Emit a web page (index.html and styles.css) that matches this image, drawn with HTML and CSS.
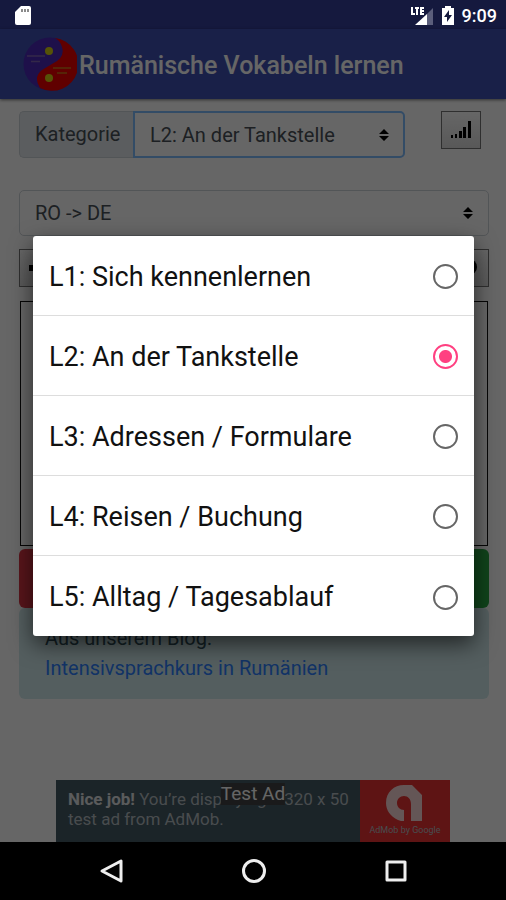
FILE: index.html
```html
<!DOCTYPE html>
<html lang="de">
<head>
<meta charset="utf-8">
<meta name="viewport" content="width=device-width, initial-scale=1">
<title>Rumänische Vokabeln lernen</title>
<link rel="stylesheet" href="styles.css">
</head>
<body>
<div class="status">
  <svg class="status-sd" width="18" height="20" viewBox="0 0 18 20"><path fill="#fff" d="M7 0h8q2 0 2 2v15q0 2-2 2H3q-2 0-2-2V6z"/><path d="M8 3v3M11 3v3M14 3v3" stroke="#666" stroke-width="1.5"/></svg>
  <div class="status-right">
    <svg width="24" height="20" viewBox="0 0 24 20"><path fill="#5b5e7b" d="M23 2v17h-6V8z"/><path fill="#fff" d="M17 8v11H5z"/><path d="M2 1v7h3M5 2h4M7 2v7M14 2h-3v6h3M11 5h3" fill="none" stroke="#fff" stroke-width="2"/></svg>
    <svg width="14" height="20" viewBox="0 0 14 20"><path fill="#fff" d="M4 0h6v2h3v17H1V2h3z"/><path fill="#15193e" d="M8 4l-5 7h3v5l5-7H8z"/></svg>
    <span>9:09</span>
  </div>
</div>
<div class="stage">
  <div class="app">
    <header class="bar">
      <svg width="54" height="56" viewBox="0 0 54 56"><circle cx="27" cy="28" r="26.5" fill="#4c28b8"/><path fill="#ef0000" d="M32 2A26.500 26.500 0 1 1 17 52Q10 41 19 34Q24 31 29 28Q46 20 36 5Z"/><circle cx="26" cy="15" r="4" fill="#d8cf12"/><circle cx="26" cy="42" r="4" fill="#d8cf12"/><path d="M4 20h18M8 25.500h9" stroke="#8065b5" stroke-width="1.500"/><path d="M30 32h18M34 37h10" stroke="#d07818" stroke-width="1.500"/></svg>
      <h1>Rumänische Vokabeln lernen</h1>
    </header>
    <main class="content">
      <div class="top">
        <div class="group">
          <label for="cat">Kategorie</label>
          <div class="pick focus">
            <select id="cat"><option>L2: An der Tankstelle</option></select>
            <svg width="10" height="12" viewBox="0 0 10 12"><path d="M0 5l5-5 5 5zM0 7h10l-5 5z"/></svg>
          </div>
        </div>
        <button class="tool" aria-label="Level"><svg width="22" height="20" viewBox="0 0 22 20"><path d="M1 15h2v3H1zM5 14h2v4H5zM9 11h3v7H9zM13 7h3v11h-3zM18 1h3v17h-3z"/></svg></button>
      </div>
      <div class="pick direction">
        <select aria-label="Richtung"><option>RO -&gt; DE</option></select>
        <svg width="10" height="12" viewBox="0 0 10 12"><path d="M0 5l5-5 5 5zM0 7h10l-5 5z"/></svg>
      </div>
      <div class="tools">
        <button class="tool" aria-label="Zurück"><svg width="22" height="20" viewBox="0 0 22 20"><path d="M1 7h20v6H1z"/></svg></button>
        <button class="tool" aria-label="Info"><svg width="22" height="20" viewBox="0 0 22 20"><circle cx="11" cy="9" r="8"/></svg></button>
      </div>
      <div class="card"></div>
      <div class="answers"><button class="no" aria-label="Falsch"></button><button class="yes" aria-label="Richtig"></button></div>
      <div class="blog">Aus unserem Blog:<br><a href="#blog">Intensivsprachkurs in Rumänien</a></div>
    </main>
    <aside class="ad">
      <p><b>Nice job!</b> You’re displaying a 320&nbsp;x&nbsp;50 test ad from AdMob.</p>
      <div class="admob">
        <svg width="40" height="38" viewBox="0 0 40 38"><path fill="#fff" d="M13 36C5 32 1 26 1 19 1 8 9 1 19 1h8l10 10v26H26V20c0-5-3-8-7-8s-7 3-7 7 3 7 7 7v11c-2 0-4 0-6-1z"/></svg>
        <small>AdMob by Google</small>
      </div>
      <span class="test">Test Ad</span>
    </aside>
  </div>
  <div class="scrim">
    <div class="dialog" role="dialog" aria-label="Kategorie">
      <label>L1: Sich kennenlernen<input type="radio" name="l"></label>
      <label>L2: An der Tankstelle<input type="radio" name="l" checked></label>
      <label>L3: Adressen / Formulare<input type="radio" name="l"></label>
      <label>L4: Reisen / Buchung<input type="radio" name="l"></label>
      <label>L5: Alltag / Tagesablauf<input type="radio" name="l"></label>
    </div>
  </div>
</div>
<nav class="nav">
  <button aria-label="Zurück"><svg width="26" height="26" viewBox="0 0 26 26"><path d="M22 3v20L3 13z"/></svg></button>
  <button aria-label="Start"><svg width="26" height="26" viewBox="0 0 26 26"><circle cx="13" cy="13" r="10.500"/></svg></button>
  <button aria-label="Übersicht"><svg width="26" height="26" viewBox="0 0 26 26"><rect x="4" y="4" width="18" height="18"/></svg></button>
</nav>
</body>
</html>
```
FILE: styles.css
```css
* { box-sizing: border-box; }
body {
  margin: 0;
  min-height: 100vh;
  display: flex;
  flex-direction: column;
  font: 20px/30px Roboto, sans-serif;
  background: #000;
}
h1, p { margin: 0; }
button { padding: 0; font: inherit; }
svg { display: block; flex: none; }
.status {
  height: 29px;
  padding: 2px 9px 0 14px;
  display: flex;
  align-items: center;
  justify-content: space-between;
  background: #15193e;
  color: #fff;
}
.status-right {
  display: flex;
  align-items: center;
  gap: 7px;
  font-size: 18px;
  font-weight: 500;
}
.stage {
  position: relative;
  flex: 1;
  display: flex;
}
.app {
  flex: 1;
  min-width: 0;
  display: flex;
  flex-direction: column;
  background: #fff;
}
.bar {
  height: 70px;
  padding: 0 23px;
  display: flex;
  align-items: center;
  gap: 2px;
  background: #3f51b5;
  box-shadow: 0 1px 3px #0008;
  color: #fff;
}
.bar h1 {
  padding-top: 4px;
  font-size: 25px;
  font-weight: 500;
  white-space: nowrap;
}
.content {
  flex: 1;
  padding: 12px 17px 0 19px;
}
.top {
  display: flex;
  justify-content: space-between;
  align-items: flex-start;
  padding-right: 8px;
  margin-bottom: 32px;
}
.group {
  display: flex;
  width: 386px;
  height: 47px;
}
.group label {
  width: 114px;
  padding: 7px 15px;
  background: #e3e8ed;
  border: 1px solid #ced4da;
  border-right: 0;
  border-radius: 5px 0 0 5px;
  color: #495057;
}
.pick {
  position: relative;
  flex: 1;
}
.pick select {
  width: 100%;
  height: 100%;
  padding: 0 15px;
  appearance: none;
  font: inherit;
  color: #495057;
  background: #fff;
  border: 1px solid #ced4da;
  border-radius: 5px;
}
.pick.focus select {
  border: 2px solid #80bdff;
  border-radius: 0 5px 5px 0;
}
.pick svg {
  position: absolute;
  right: 16px;
  top: 50%;
  transform: translateY(-50%);
}
.direction {
  height: 46px;
  margin-bottom: 13px;
}
.tool {
  width: 40px;
  height: 38px;
  display: grid;
  place-items: center;
  background: linear-gradient(#fff, #ddd);
  border: 1px solid #777;
}
.tools {
  display: flex;
  justify-content: space-between;
}
.card {
  height: 245px;
  margin: 14px 1px 3px;
  border: 1px solid #111;
}
.answers {
  display: flex;
  justify-content: space-between;
}
.answers button {
  width: 46%;
  height: 59px;
  border: 0;
  border-radius: 6px;
}
.no { background: #dc3545; }
.yes { background: #28a745; }
.blog {
  height: 91px;
  padding: 15px 26px;
  background: #d1ecee;
  border-radius: 6px;
  color: #31525c;
}
.blog a {
  color: #2f80ff;
  text-decoration: none;
}
.ad {
  position: relative;
  width: 394px;
  height: 62px;
  margin: 0 auto;
  display: flex;
  background: #455a64;
  color: #b5bec2;
  font-size: 17px;
  line-height: 20px;
}
.ad p {
  flex: 1;
  padding: 9px 0 0 12px;
}
.ad b { color: #e0e4e6; }
.test {
  position: absolute;
  top: 3px;
  left: 50%;
  transform: translateX(-50%);
  background: #414344;
  color: #fff;
  font-size: 19px;
  line-height: 22px;
}
.admob {
  width: 90px;
  padding-top: 4px;
  display: flex;
  flex-direction: column;
  align-items: center;
  background: #ec3434;
}
.admob svg { opacity: .8; }
.admob small {
  font-size: 9px;
  line-height: 16px;
}
.scrim {
  position: absolute;
  inset: 0;
  display: grid;
  align-content: center;
  padding: 0 32px 0 33px;
  background: #0009;
}
.dialog {
  background: #fff;
  border-radius: 3px;
  box-shadow: 0 8px 22px #0009;
}
.dialog label {
  height: 80px;
  padding: 3px 16px 0;
  display: flex;
  align-items: center;
  justify-content: space-between;
  font-size: 27px;
  color: #111;
  border-bottom: 1px solid #ddd;
}
.dialog label:last-child { border-bottom: 0; }
.dialog input {
  appearance: none;
  width: 25px;
  height: 25px;
  margin: 0;
  border: 2px solid #666;
  border-radius: 50%;
}
.dialog input:checked {
  border-color: #ff4081;
  background: radial-gradient(circle, #ff4081 6px, #fff 7px);
}
.nav {
  height: 58px;
  padding: 0 39px 0 41px;
  display: grid;
  grid-template-columns: repeat(3, 1fr);
  justify-items: center;
  background: #000;
}
.nav button {
  border: 0;
  background: none;
}
.nav svg {
  fill: none;
  stroke: #eee;
  stroke-width: 3;
  stroke-linejoin: round;
}
```
